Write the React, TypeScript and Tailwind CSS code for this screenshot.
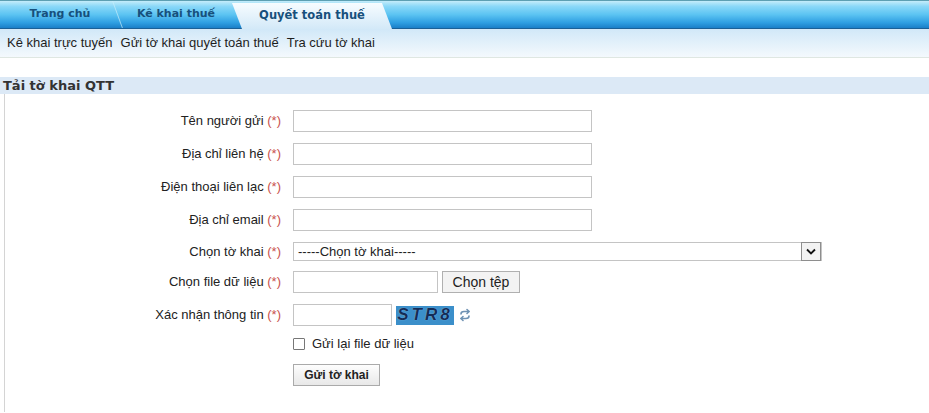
import React from 'react';

const Req = () => <span className="text-[#c9524e]"> (*)</span>;

function Row({ label, children, h = 'h-[22px]', mb = 'mb-[11px]' }: { label: string; children: React.ReactNode; h?: string; mb?: string }) {
  return (
    <div className={`flex items-center ${h} ${mb}`}>
      <div className="w-[276px] shrink-0 text-right text-[13px] text-[#222]">
        {label}
        <Req />
      </div>
      <div className="ml-[12px] flex items-center">{children}</div>
    </div>
  );
}

function Tab({ label, w, sep = true }: { label: string; w: string; sep?: boolean }) {
  return (
    <div className={`relative flex h-full ${w} items-center justify-center font-['DejaVu_Sans',Verdana,sans-serif] text-[11px] font-bold text-[#17507c]`}>
      {label}
      {sep && <span className="absolute right-[2px] top-0 h-full w-px skew-x-[20deg] bg-[#c9eefb]/70" />}
    </div>
  );
}

export default function App() {
  return (
    <div className="min-h-screen w-[929px] bg-white font-['Liberation_Sans',Arial,sans-serif] text-[#222]">
      {/* Tabs */}
      <div className="flex h-[29px] items-end border-y border-t-[#5d9fb2] border-b-[#1b6097] bg-[linear-gradient(to_bottom,#c4ecfa_0%,#8ad8f8_20%,#5cc4f2_50%,#2f9fe2_80%,#1a7fc8_100%)]">
        <Tab label="Trang chủ" w="w-[120px]" />
        <Tab label="Kê khai thuế" w="w-[112px]" sep={false} />
        <div className="relative z-10 -mb-px flex h-[26px] w-[160px] items-center justify-center bg-[linear-gradient(to_bottom,#f7fcff,#d3e9f8)] font-['DejaVu_Sans',Verdana,sans-serif] text-[11.5px] font-bold text-[#17507c] [clip-path:polygon(0_0,calc(100%-10px)_0,100%_100%,10px_100%)]">
          Quyết toán thuế
        </div>
      </div>

      {/* Sub menu */}
      <div className="flex h-[29px] items-center gap-[8px] border-b border-[#dfe7e2] bg-[linear-gradient(to_bottom,#d1e8f8,#f4f9fd)] pl-[7px] text-[13px] text-[#1e1e1e]">
        <span>Kê khai trực tuyến</span>
        <span>Gửi tờ khai quyết toán thuế</span>
        <span>Tra cứu tờ khai</span>
      </div>

      {/* Section */}
      <div className="mt-[19px] h-[17px] bg-[#dce9f6] pl-[3px] font-['DejaVu_Sans',Verdana,sans-serif] text-[13px] font-bold leading-[17px] text-[#333]">
        Tải tờ khai QTT
      </div>
      <div className="ml-[4px] min-h-[318px] border-l border-[#d4d4d4] pt-[16px]">
        <Row label="Tên người gửi">
          <input className="h-[22px] w-[299px] border border-[#c4c4c4] bg-white outline-none" />
        </Row>
        <Row label="Địa chỉ liên hệ">
          <input className="h-[22px] w-[299px] border border-[#c4c4c4] bg-white outline-none" />
        </Row>
        <Row label="Điện thoại liên lạc">
          <input className="h-[22px] w-[299px] border border-[#c4c4c4] bg-white outline-none" />
        </Row>
        <Row label="Địa chỉ email">
          <input className="h-[22px] w-[299px] border border-[#c4c4c4] bg-white outline-none" />
        </Row>
        <Row label="Chọn tờ khai" h="h-[19px]" mb="mb-[10px]">
          <div className="flex h-[19px] w-[529px] items-center border border-[#c4c4c4] bg-white">
            <span className="flex-1 pl-[4px] text-[13px] text-[#222]">-----Chọn tờ khai-----</span>
            <span className="flex h-[19px] w-[20px] items-center justify-center border border-[#8e8e8e] bg-[#f2f2f2]">
              <svg width="10" height="7" viewBox="0 0 10 7" fill="none" stroke="#111" strokeWidth="1.8">
                <path d="M1 1.5 5 5.5 9 1.5" />
              </svg>
            </span>
          </div>
        </Row>
        <Row label="Chọn file dữ liệu">
          <div className="flex items-center gap-[4px]">
            <input className="h-[22px] w-[145px] border border-[#c4c4c4] bg-white outline-none" />
            <button className="h-[22px] w-[78px] border border-[#b0b0b0] bg-[#f3f3f3] text-[14px] leading-none text-[#222]">Chọn tệp</button>
          </div>
        </Row>
        <Row label="Xác nhận thông tin" mb="mb-[12px]">
          <div className="flex items-center">
            <input className="h-[22px] w-[99px] border border-[#c4c4c4] bg-white outline-none" />
            <div className="ml-[4px] flex h-[19px] w-[58px] items-center justify-center bg-[#3b8fca] text-[17px] font-bold italic tracking-[3px] text-[#132c57] [text-shadow:0_0_1px_#9fd0ef]">
              STR8
            </div>
            <svg className="ml-[5px]" width="12" height="14" viewBox="0 0 12 14" fill="none" stroke="#6f92b3" strokeWidth="1.6" strokeLinecap="round" strokeLinejoin="round">
              <path d="M2 6 Q2 3.5 5 3.5 H10" />
              <path d="M8 1.5 10 3.5 8 5.5" />
              <path d="M10 8 Q10 10.5 7 10.5 H2" />
              <path d="M4 8.5 2 10.5 4 12.5" />
            </svg>
          </div>
        </Row>
        <div className="mb-[12px] ml-[288px] flex h-[12px] items-center">
          <span className="h-[12px] w-[12px] rounded-[1px] border border-[#777] bg-white" />
          <span className="ml-[7px] text-[13px] text-[#222]">Gửi lại file dữ liệu</span>
        </div>
        <div className="ml-[288px]">
          <button className="h-[22px] w-[87px] border border-[#aaa] bg-[linear-gradient(to_bottom,#fdfdfd,#e8e8e8)] text-[12px] font-bold text-[#222]">
            Gửi tờ khai
          </button>
        </div>
      </div>
    </div>
  );
}
